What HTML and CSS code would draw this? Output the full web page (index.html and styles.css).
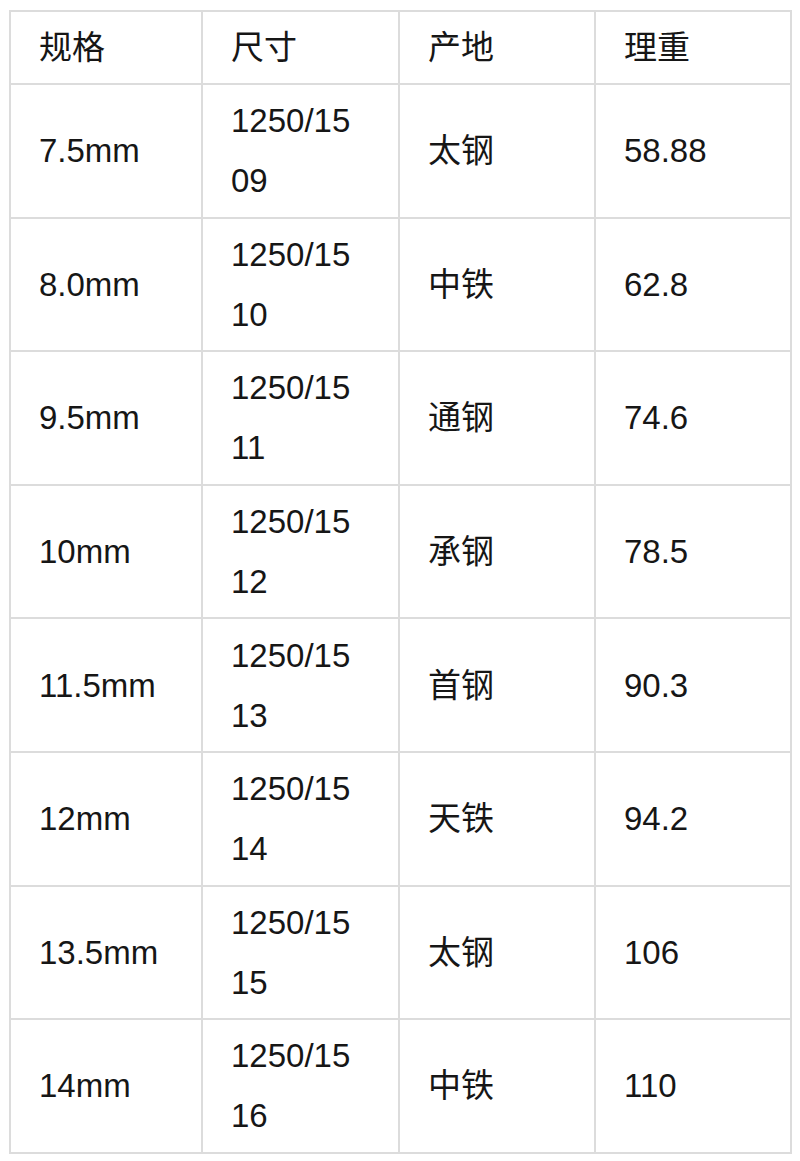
FILE: index.html
```html
<!DOCTYPE html>
<html lang="zh">
<head>
<meta charset="utf-8">
<link rel="stylesheet" href="styles.css">
</head>
<body>
<table class="spec">
  <colgroup>
    <col class="c1"><col class="c2"><col class="c3"><col class="c4">
  </colgroup>
  <tr class="head"><td>规格</td><td>尺寸</td><td>产地</td><td>理重</td></tr>
  <tr><td>7.5mm</td><td>1250/1509</td><td>太钢</td><td>58.88</td></tr>
  <tr><td>8.0mm</td><td>1250/1510</td><td>中铁</td><td>62.8</td></tr>
  <tr><td>9.5mm</td><td>1250/1511</td><td>通钢</td><td>74.6</td></tr>
  <tr><td>10mm</td><td>1250/1512</td><td>承钢</td><td>78.5</td></tr>
  <tr><td>11.5mm</td><td>1250/1513</td><td>首钢</td><td>90.3</td></tr>
  <tr><td>12mm</td><td>1250/1514</td><td>天铁</td><td>94.2</td></tr>
  <tr><td>13.5mm</td><td>1250/1515</td><td>太钢</td><td>106</td></tr>
  <tr><td>14mm</td><td>1250/1516</td><td>中铁</td><td>110</td></tr>
</table>
</body>
</html>
```
FILE: styles.css
```css
html, body {
  margin: 0;
  padding: 0;
  background: #ffffff;
}
body {
  font-family: "Liberation Sans", Arial, "Noto Sans CJK SC", sans-serif;
  color: #161616;
}
.spec {
  margin: 10px 9px;
  width: 781px;
  table-layout: fixed;
  border-collapse: collapse;
  font-size: 33px;
  line-height: 60px;
}
.spec .c1 { width: 192px; }
.spec .c2 { width: 197px; }
.spec .c3 { width: 196px; }
.spec .c4 { width: 196px; }
.spec td {
  border: 2px solid #dcdcdc;
  padding: 6.3px 38px 5.3px 28px;
  vertical-align: middle;
  word-break: break-all;
  text-align: left;
}
.spec .head td {
  padding-top: 5.5px;
  padding-bottom: 5.5px;
}
```
